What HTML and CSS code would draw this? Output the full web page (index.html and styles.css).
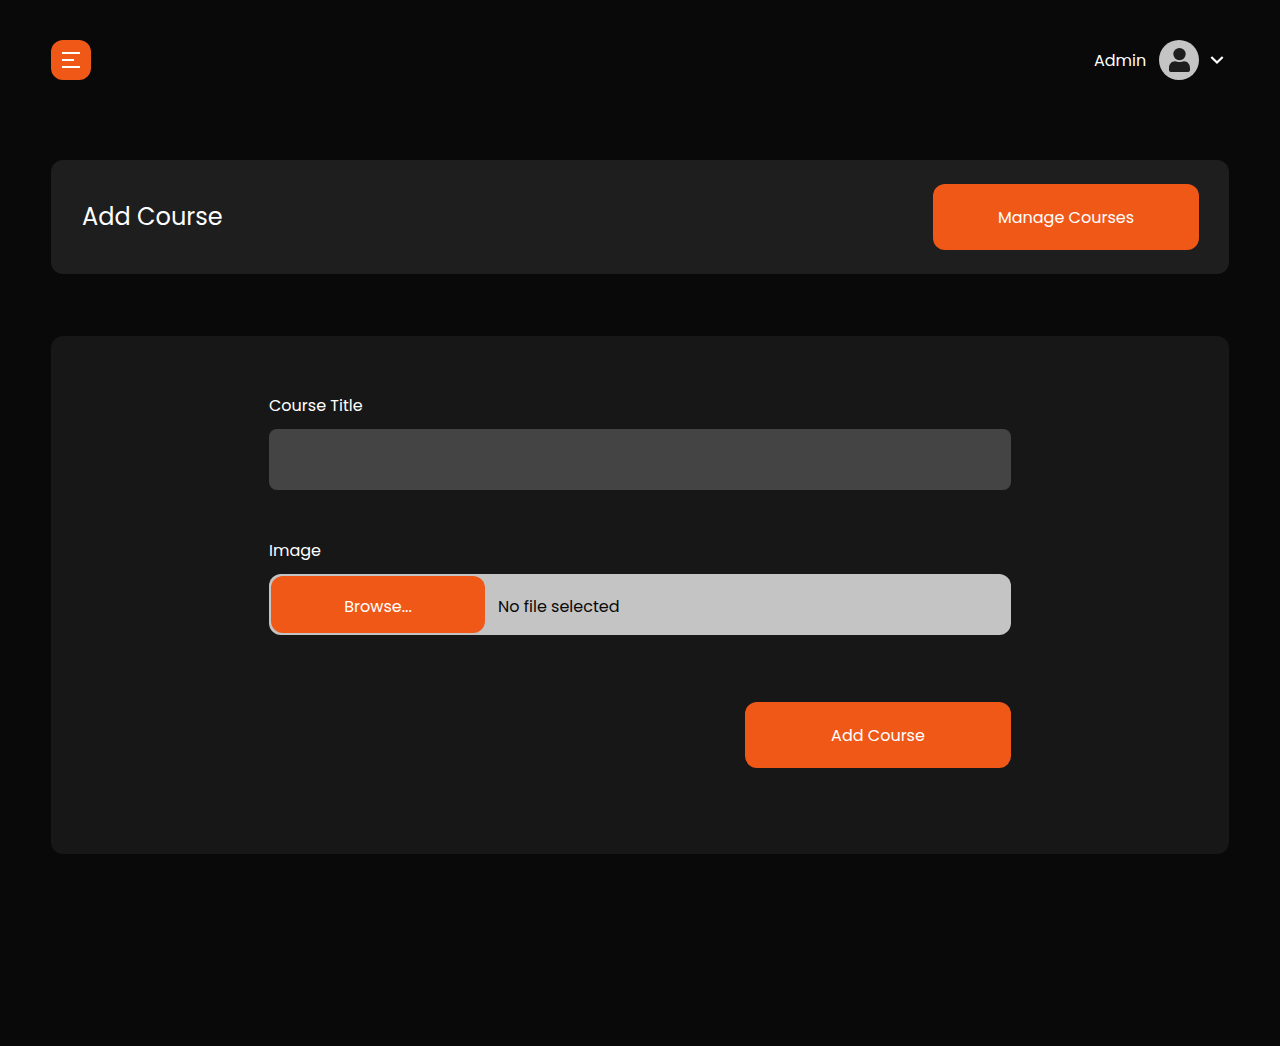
FILE: index.html
```html
<!DOCTYPE html>
<html lang="en">
<head>
<meta charset="utf-8">
<title>Add Course</title>
<link rel="stylesheet" href="styles.css">
</head>
<body>
<header class="topbar">
  <button class="menu-button" type="button" aria-label="Menu">
    <svg width="40" height="40" viewBox="0 0 40 40" fill="#fff"><path d="M11 12h18v2H11zM11 19h12v2H11zM11 26h18v2H11z"/></svg>
  </button>
  <div class="account">
    <span class="account-name">Admin</span>
    <svg class="avatar" width="40" height="40" viewBox="0 0 40 40"><circle cx="20" cy="20" r="20" fill="#c4c4c4"/><circle cx="20.5" cy="14.1" r="6.2" fill="#1d1d1d"/><path d="M10 28c0-4 2.6-6.8 6-6.8 1.800 0 2.200.9 4.500.9s2.700-.9 4.500-.9c3.400 0 6 2.800 6 6.800v2c0 1.300-.8 2-2 2H12c-1.200 0-2-.7-2-2z" fill="#1d1d1d"/></svg>
    <svg class="chevron" width="14" height="10" viewBox="0 0 14 10" fill="none" stroke="#fff" stroke-width="2.200"><path d="M1.300 2 7 7.500 12.700 2"/></svg>
  </div>
</header>
<main>
  <section class="title-bar">
    <h1>Add Course</h1>
    <button class="button" type="button">Manage Courses</button>
  </section>
  <form class="panel">
    <label class="label" for="title">Course Title</label>
    <input class="field" id="title" type="text">
    <div class="label image-label">Image</div>
    <div class="file-field">
      <button class="browse" type="button">Browse...</button>
      <span class="file-name">No file selected</span>
    </div>
    <button class="button submit" type="button">Add Course</button>
  </form>
</main>
</body>
</html>
```
FILE: styles.css
```css
* { box-sizing: border-box; }
body {
  margin: 0;
  min-height: 1046px;
  padding: 40px 51px;
  background: #090909;
  color: #fff;
  font: 400 16px/24px Poppins, Inter, sans-serif;
}
button, input { border: 0; padding: 0; margin: 0; font: inherit; color: inherit; }
svg { display: block; }
.topbar { display: flex; justify-content: space-between; height: 40px; }
.menu-button { width: 40px; height: 40px; border-radius: 12px; background: #f05818; }
.account { display: flex; align-items: center; padding-right: 5px; }
.account-name { width: 65px; padding-top: 2px; }
.chevron { margin-left: 11px; }
.title-bar {
  display: flex;
  align-items: center;
  justify-content: space-between;
  height: 114px;
  margin-top: 80px;
  padding: 0 30px 0 31px;
  border-radius: 12px;
  background: #1e1e1e;
}
h1 { margin: 0; font-size: 24px; line-height: 36px; font-weight: 400; }
.button { width: 266px; height: 66px; padding-top: 2px; border-radius: 12px; background: #f05818; }
.panel {
  display: flex;
  flex-direction: column;
  height: 518px;
  margin-top: 62px;
  padding: 58px 218px 0;
  border-radius: 12px;
  background: #171717;
}
.label { height: 24px; }
.image-label { margin-top: 49px; }
.field {
  width: 100%;
  height: 61px;
  margin-top: 11px;
  padding: 0 16px;
  border-radius: 8px;
  background: #444;
}
.file-field {
  display: flex;
  height: 61px;
  margin-top: 11px;
  padding: 1.5px 2px;
  border-radius: 12px;
  background: #c4c4c4;
}
.browse { width: 214px; height: 57px; padding-top: 5px; border-radius: 12px; background: #f05818; }
.file-name { margin: 19px 0 0 13px; color: #090909; }
.submit { align-self: flex-end; margin-top: 67px; }
```
